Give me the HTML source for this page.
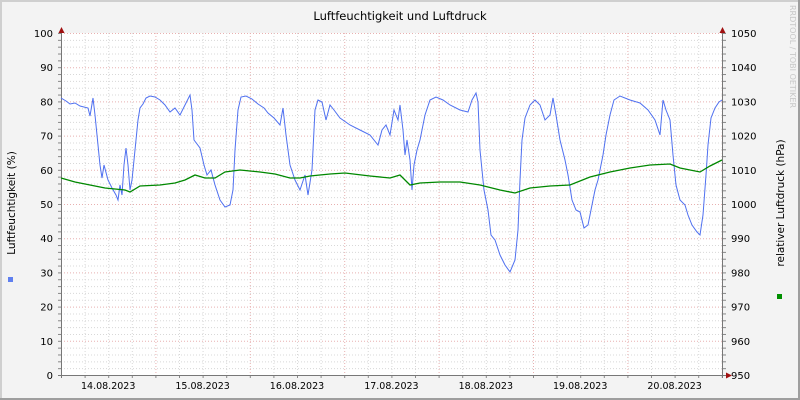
<!DOCTYPE html>
<html><head><meta charset="utf-8"><style>
html,body{margin:0;padding:0;width:800px;height:400px;overflow:hidden;background:#f3f3f3}
svg{display:block;font-family:"DejaVu Sans","Liberation Sans",sans-serif}
</style></head><body>
<svg width="800" height="400" viewBox="0 0 800 400" xmlns="http://www.w3.org/2000/svg">
<rect x="0" y="0" width="800" height="400" fill="#f3f3f3"/>
<rect x="0" y="0" width="800" height="2" fill="#cfcfcf"/>
<rect x="0" y="0" width="2" height="400" fill="#cfcfcf"/>
<rect x="798" y="0" width="2" height="400" fill="#9e9e9e"/>
<rect x="0" y="398" width="800" height="2" fill="#9e9e9e"/>
<rect x="61" y="33" width="662" height="342" fill="#ffffff"/>
<g id="grid"></g>
<text x="400" y="20" font-size="11.5" text-anchor="middle" fill="#000">Luftfeuchtigkeit und Luftdruck</text>
<text transform="translate(15,203) rotate(-90)" font-size="10.5" text-anchor="middle" fill="#000">Luftfeuchtigkeit (%)</text>
<text transform="translate(784,203) rotate(-90)" font-size="10.5" text-anchor="middle" fill="#000">relativer Luftdruck (hPa)</text>
<text transform="translate(790,5) rotate(90)" font-size="8" fill="#c8c8c8">RRDTOOL / TOBI OETIKER</text>
<rect x="8" y="277" width="5" height="5" fill="#5f7fef"/>
<rect x="777" y="294" width="5" height="5" fill="#009000"/>
<g id="lines"></g>
</svg>
<script>
var ns="http://www.w3.org/2000/svg",g=document.getElementById("grid"),L=document.getElementById("lines");
function el(p,t,a){var e=document.createElementNS(ns,t);for(var k in a)e.setAttribute(k,a[k]);p.appendChild(e);return e}
for(var v=0;v<=100;v+=2){var y=375-v*3.42;var maj=v%10==0;
 if(v>0)el(g,"line",{x1:61,x2:723,y1:y+.5,y2:y+.5,stroke:maj?"#e8b0b0":"#d8d8d8","stroke-dasharray":"1,2"});
 el(g,"line",{x1:58,x2:61,y1:y+.5,y2:y+.5,stroke:"#888"});el(g,"line",{x1:723,x2:726,y1:y+.5,y2:y+.5,stroke:"#888"});
 if(maj){var t=el(g,"text",{x:53,y:y+4,"font-size":"10","text-anchor":"end",fill:"#000"});t.textContent=v;
 var t2=el(g,"text",{x:731,y:y+4,"font-size":"10",fill:"#000"});t2.textContent=950+v;}}
var dw=94.4;
for(var i=0;i<=28;i++){var x=61+i*dw/4;if(x>722)break;var maj=i%4==0;
 if(i>0)el(g,"line",{x1:x+.5,x2:x+.5,y1:33,y2:375,stroke:maj?"#e8b0b0":"#d8d8d8","stroke-dasharray":"1,2"});
 el(g,"line",{x1:x+.5,x2:x+.5,y1:375,y2:378,stroke:"#888"});}
var days=["14.08.2023","15.08.2023","16.08.2023","17.08.2023","18.08.2023","19.08.2023","20.08.2023"];
for(var i=0;i<7;i++){var t=el(g,"text",{x:61+dw*(i+.5),y:389,"font-size":"9.5","text-anchor":"middle",fill:"#000"});t.textContent=days[i];}
el(g,"line",{x1:61.5,x2:61.5,y1:30,y2:378,stroke:"#777"});
el(g,"line",{x1:722.5,x2:722.5,y1:30,y2:378,stroke:"#777"});
el(g,"line",{x1:58,x2:726,y1:375.5,y2:375.5,stroke:"#777"});
el(g,"path",{d:"M58.5 33 L64.5 33 L61.5 27 Z",fill:"#a01010"});
el(g,"path",{d:"M719.5 33 L725.5 33 L722.5 27 Z",fill:"#a01010"});
el(g,"path",{d:"M726 372.5 L726 378.5 L732 375.5 Z",fill:"#a01010"});
var blue="61 98 66 101 70 104 75 103 80 106 88 108 90 116 93 98 95 115 100 165 102 178 104 165 108 180 112 188 116 195 118 200 120 185 122 195 124 165 126 148 128 165 130 190 132 180 135 150 138 120 140 108 143 104 146 98 150 96 155 97 160 100 165 105 170 112 175 108 180 115 185 105 190 95 192 110 194 140 200 148 204 165 207 175 211 170 215 185 220 200 225 207 230 205 233 190 235 150 238 110 241 97 246 96 252 99 258 104 264 108 268 113 274 118 280 125 283 108 286 135 290 165 295 180 300 190 305 175 308 195 312 170 315 110 318 100 322 102 326 120 330 105 334 110 340 118 350 125 360 130 370 135 378 145 382 130 386 125 390 135 394 110 398 120 400 105 403 130 405 155 407 140 410 160 412 190 414 165 417 150 420 140 425 115 430 100 436 97 443 100 450 105 460 110 468 112 472 100 476 93 478 102 480 150 484 190 488 210 491 235 495 240 500 255 505 265 510 272 515 260 518 230 520 180 522 140 525 118 530 105 535 100 540 105 545 120 550 115 553 98 556 115 560 140 565 160 568 175 572 200 576 210 580 212 584 228 588 225 592 205 595 190 598 180 600 170 603 155 606 135 610 115 614 100 620 96 630 100 640 103 648 110 655 120 660 135 663 100 666 110 670 120 673 155 676 185 680 200 685 205 688 215 692 225 697 232 700 235 703 215 706 175 708 145 711 118 715 108 719 102 722 100";
var green="61 178 75 182 90 185 105 188 125 190 130 192 140 186 160 185 175 183 185 180 195 175 205 178 215 178 225 172 240 170 260 172 275 174 290 178 300 178 310 176 330 174 345 173 370 176 390 178 400 175 410 185 420 183 440 182 460 182 480 185 500 190 515 193 530 188 550 186 570 185 590 177 610 172 630 168 650 165 670 164 680 168 700 172 710 166 722 160";
function poly(s){var a=s.split(" ").map(Number),d="M"+a[0]+" "+a[1];for(var i=2;i<a.length;i+=2){d+=" L"+a[i]+" "+a[i+1];}return d}
el(L,"path",{d:poly(blue),fill:"none",stroke:"#4f70f0","stroke-width":"1"});
el(L,"path",{d:poly(green),fill:"none",stroke:"#008800","stroke-width":"1.3"});
</script>
</body></html>
